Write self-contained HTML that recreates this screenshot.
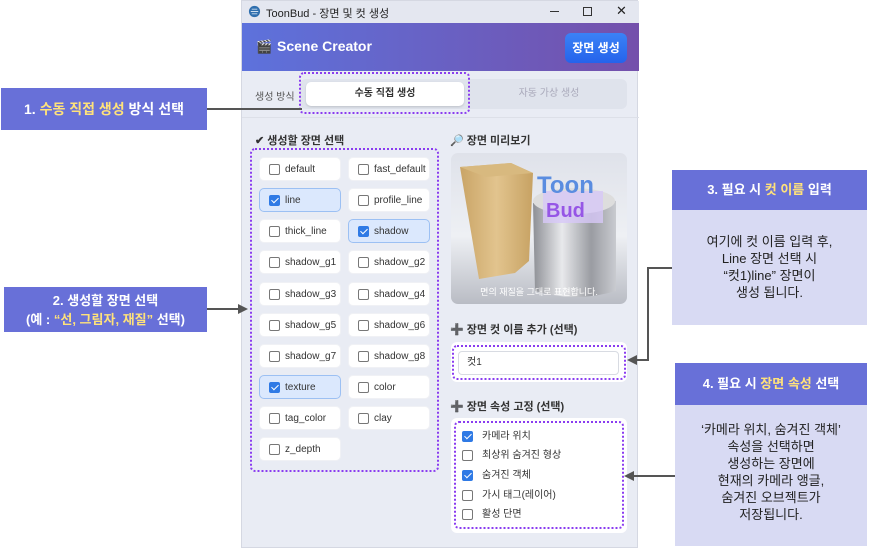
<!DOCTYPE html>
<html><head><meta charset="utf-8"><style>
*{box-sizing:border-box;margin:0;padding:0}
body{width:871px;height:548px;background:#fff;font-family:"Liberation Sans","Noto Sans CJK KR",sans-serif;position:relative;overflow:hidden;color:#333}
.abs{position:absolute}
.win{left:241px;top:0;width:397px;height:548px;background:#e9ecf4;border:1px solid #d5d8e2}
.title{left:0;top:0;width:397px;height:22px;background:#e4e7f0;font-size:11px;color:#222}
.hdr{left:0;top:22px;width:397px;height:48px;background:linear-gradient(90deg,#5d72dc,#7450ab)}
.btn{background:linear-gradient(180deg,#3b82f6,#2563eb);color:#fff;font-size:12px;font-weight:bold;border-radius:6px;text-align:center}
.cb{position:absolute;width:82px;height:24px;background:#fff;border-radius:5px;font-size:10px;color:#333;line-height:24px;padding-left:25px;border:1px solid #f0f1f5}
.cb.on{background:#dbe8fd;border:1px solid #9cc0f3}
.cb i,.at i{position:absolute;left:9px;top:6px;width:11px;height:11px;border:1.3px solid #777;border-radius:2px;background:#fff}
.cb.on i,.at.on i{background:#2f7ae5;border-color:#2f7ae5}
.cb.on i:after,.at.on i:after{content:"";position:absolute;left:3px;top:0px;width:3px;height:6px;border:solid #fff;border-width:0 1.6px 1.6px 0;transform:rotate(45deg)}
.dot{border:2.5px dotted #8a3cf0;border-radius:5px}
.lbl{font-size:11px;font-weight:bold;color:#333}
.ann{background:#6870d8;color:#fff;font-weight:bold;font-size:14px;text-align:center}
.y{color:#ffe27a}
.annb{background:#d8daf3;color:#222;font-size:13px;text-align:center;line-height:17px}
.at{position:absolute;left:8px;height:20px;font-size:10px;line-height:20px;padding-left:23px;color:#333;width:160px}
.at i{left:3px;top:4px}
.line{background:#555}
</style></head><body>

<div class="abs win">
 <div class="abs title">
  <svg class="abs" style="left:6px;top:4px" width="13" height="13" viewBox="0 0 14 14"><circle cx="7" cy="7" r="6" fill="#2f6fae"/><path d="M3 7h8M4 4.5h6M4 9.5h6" stroke="#cde" stroke-width="1"/></svg>
  <span class="abs" style="left:24px;top:4px">ToonBud - 장면 및 컷 생성</span>
  <span class="abs" style="left:308px;top:10px;width:9px;height:1px;background:#333"></span>
  <span class="abs" style="left:341px;top:6px;width:9px;height:9px;border:1px solid #333"></span>
  <span class="abs" style="left:374px;top:2px;font-size:13px">✕</span>
 </div>
 <div class="abs hdr">
  <span class="abs" style="left:14px;top:16px;font-size:13px">🎬</span>
  <span class="abs" style="left:35px;top:15px;color:#fff;font-size:14px;font-weight:bold">Scene Creator</span>
  <div class="abs btn" style="left:323px;top:10px;width:62px;height:30px;line-height:30px">장면 생성</div>
 </div>
 <span class="abs" style="left:13px;top:87px;font-size:10px;color:#555">생성 방식</span>
 <div class="abs" style="left:58px;top:78px;width:327px;height:30px;background:#dfe3ec;border-radius:6px"></div>
 <div class="abs" style="left:64px;top:81px;width:158px;height:24px;background:#fff;border-radius:5px;box-shadow:0 1px 2px rgba(0,0,0,.15);font-size:10px;font-weight:bold;text-align:center;line-height:24px">수동 직접 생성</div>
 <div class="abs" style="left:232px;top:81px;width:150px;height:24px;font-size:10px;color:#aab;text-align:center;line-height:24px">자동 가상 생성</div>
 <div class="abs dot" style="left:57px;top:71px;width:171px;height:42px"></div>
 <div class="abs" style="left:0;top:116px;width:397px;height:1px;background:#dde0e8"></div>

 <span class="abs lbl" style="left:13px;top:131px">✔ 생성할 장면 선택</span>
 <div class="abs dot" style="left:8px;top:147px;width:189px;height:324px"></div>
 <div class="abs" style="left:8px;top:0">
  <div class="cb" style="left:9px;top:156px"><i></i>default</div>
  <div class="cb" style="left:98px;top:156px"><i></i>fast_default</div>
  <div class="cb on" style="left:9px;top:187px"><i></i>line</div>
  <div class="cb" style="left:98px;top:187px"><i></i>profile_line</div>
  <div class="cb" style="left:9px;top:218px"><i></i>thick_line</div>
  <div class="cb on" style="left:98px;top:218px"><i></i>shadow</div>
  <div class="cb" style="left:9px;top:249px"><i></i>shadow_g1</div>
  <div class="cb" style="left:98px;top:249px"><i></i>shadow_g2</div>
  <div class="cb" style="left:9px;top:281px"><i></i>shadow_g3</div>
  <div class="cb" style="left:98px;top:281px"><i></i>shadow_g4</div>
  <div class="cb" style="left:9px;top:312px"><i></i>shadow_g5</div>
  <div class="cb" style="left:98px;top:312px"><i></i>shadow_g6</div>
  <div class="cb" style="left:9px;top:343px"><i></i>shadow_g7</div>
  <div class="cb" style="left:98px;top:343px"><i></i>shadow_g8</div>
  <div class="cb on" style="left:9px;top:374px"><i></i>texture</div>
  <div class="cb" style="left:98px;top:374px"><i></i>color</div>
  <div class="cb" style="left:9px;top:405px"><i></i>tag_color</div>
  <div class="cb" style="left:98px;top:405px"><i></i>clay</div>
  <div class="cb" style="left:9px;top:436px"><i></i>z_depth</div>
 </div>

 <span class="abs lbl" style="left:208px;top:131px">🔎 장면 미리보기</span>
 <div class="abs" style="left:209px;top:152px;width:176px;height:151px;border-radius:7px;overflow:hidden;background:linear-gradient(180deg,#dfe2ea 0%,#eef0f4 55%,#b9bcc4 100%)">
  <svg width="176" height="151" viewBox="0 0 176 151">
   <defs><linearGradient id="w" x1="0" x2="1"><stop offset="0" stop-color="#c9a466"/><stop offset=".5" stop-color="#e2c48e"/><stop offset="1" stop-color="#c7a263"/></linearGradient>
   <linearGradient id="c" x1="0" x2="1"><stop offset="0" stop-color="#8d8f95"/><stop offset=".35" stop-color="#e8e9ec"/><stop offset=".7" stop-color="#9a9ca2"/><stop offset="1" stop-color="#c9cbd0"/></linearGradient></defs>
   <path d="M9 14 L60 10 L82 20 L78 108 L64 120 L28 126 Z" fill="url(#w)"/>
   <path d="M9 14 L60 10 L82 20 L35 24 Z" fill="#d8b97f"/>
   <path d="M82 50 Q120 36 165 48 L165 138 Q125 150 84 138 Z" fill="url(#c)"/>
   <ellipse cx="123" cy="48" rx="41" ry="13" fill="#ddd"/>
   <rect x="92" y="38" width="60" height="32" fill="#d7c8f7" opacity=".8"/>
   <text x="86" y="40" font-family="Liberation Sans" font-weight="bold" font-size="24" fill="#5a8de0">Toon</text>
   <text x="95" y="64" font-family="Liberation Sans" font-weight="bold" font-size="20" fill="#9656e6">Bud</text>
   <text x="88" y="142" text-anchor="middle" font-family="Liberation Sans,Noto Sans CJK KR" font-size="9" fill="#fff">면의 재질을 그대로 표현합니다.</text>
  </svg>
 </div>

 <span class="abs lbl" style="left:208px;top:320px">➕ 장면 컷 이름 추가 (선택)</span>
 <div class="abs" style="left:209px;top:341px;width:176px;height:40px;background:#fff;border-radius:6px"></div>
 <div class="abs dot" style="left:210px;top:344px;width:174px;height:35px"></div>
 <div class="abs" style="left:216px;top:350px;width:161px;height:24px;border:1px solid #d8dbe2;border-radius:4px;background:#fff;font-size:10px;line-height:22px;padding-left:8px">컷1</div>

 <span class="abs lbl" style="left:208px;top:397px">➕ 장면 속성 고정 (선택)</span>
 <div class="abs" style="left:209px;top:417px;width:176px;height:115px;background:#fff;border-radius:6px"></div>
 <div class="abs dot" style="left:212px;top:420px;width:170px;height:108px"></div>
 <div class="abs" style="left:209px;top:0">
  <div class="at on" style="top:426px"><i></i>카메라 위치</div>
  <div class="at" style="top:445px"><i></i>최상위 숨겨진 형상</div>
  <div class="at on" style="top:465px"><i></i>숨겨진 객체</div>
  <div class="at" style="top:485px"><i></i>가시 태그(레이어)</div>
  <div class="at" style="top:504px"><i></i>활성 단면</div>
 </div>
</div>

<div class="abs ann" style="left:1px;top:88px;width:206px;height:42px;line-height:42px">1. <span class="y">수동 직접 생성</span> 방식 선택</div>
<div class="abs line" style="left:207px;top:108px;width:95px;height:2px"></div>

<div class="abs ann" style="left:4px;top:287px;width:203px;height:45px;font-size:13px;line-height:19px;padding-top:4px">2. 생성할 장면 선택<br>(예 : <span class="y">“선, 그림자, 재질”</span> 선택)</div>
<div class="abs line" style="left:207px;top:308px;width:34px;height:2px"></div>
<div class="abs" style="left:238px;top:304px;border-left:10px solid #555;border-top:5px solid transparent;border-bottom:5px solid transparent"></div>

<div class="abs ann" style="left:672px;top:170px;width:195px;height:40px;line-height:40px;font-size:13px">3. 필요 시 <span class="y">컷 이름</span> 입력</div>
<div class="abs annb" style="left:672px;top:210px;width:195px;height:115px;padding-top:23px">여기에 컷 이름 입력 후,<br>Line 장면 선택 시<br>“컷1)line” 장면이<br>생성 됩니다.</div>
<div class="abs line" style="left:648px;top:267px;width:24px;height:2px"></div>
<div class="abs line" style="left:647px;top:267px;width:2px;height:94px"></div>
<div class="abs line" style="left:636px;top:359px;width:13px;height:2px"></div>
<div class="abs" style="left:627px;top:355px;border-right:10px solid #555;border-top:5px solid transparent;border-bottom:5px solid transparent"></div>

<div class="abs ann" style="left:675px;top:363px;width:192px;height:42px;line-height:42px;font-size:13px">4. 필요 시 <span class="y">장면 속성</span> 선택</div>
<div class="abs annb" style="left:675px;top:405px;width:192px;height:141px;padding-top:16px">‘카메라 위치, 숨겨진 객체’<br>속성을 선택하면<br>생성하는 장면에<br>현재의 카메라 앵글,<br>숨겨진 오브젝트가<br>저장됩니다.</div>
<div class="abs line" style="left:634px;top:475px;width:41px;height:2px"></div>
<div class="abs" style="left:624px;top:471px;border-right:10px solid #555;border-top:5px solid transparent;border-bottom:5px solid transparent"></div>

</body></html>
